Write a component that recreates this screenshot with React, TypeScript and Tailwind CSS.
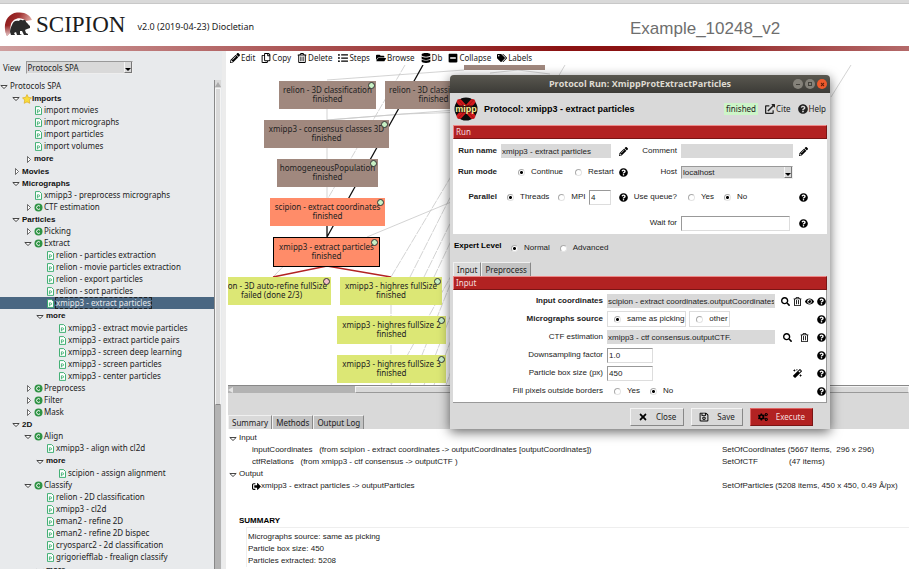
import React from "react";
import {
  FaPencilAlt,
  FaRegCopy,
  FaRegTrashAlt,
  FaListUl,
  FaFolderOpen,
  FaDatabase,
  FaMinusSquare,
  FaTags,
  FaQuestionCircle,
  FaExternalLinkAlt,
  FaSearch,
  FaEye,
  FaMagic,
  FaCogs,
  FaTimes,
  FaRegSave,
  FaSignOutAlt,
} from "react-icons/fa";

const noto = "font-['Noto_Sans',sans-serif]";
const arial = "font-['Liberation_Sans',sans-serif]";

/* ---------- header ---------- */

function ScipionLogo() {
  return (
    <svg width="30" height="26" viewBox="0 0 30 26" aria-hidden="true">
      <defs>
        <linearGradient id="crest" x1="0" y1="0" x2="1" y2="0.4">
          <stop offset="0" stopColor="#8a1414" />
          <stop offset="0.5" stopColor="#a03030" />
          <stop offset="1" stopColor="#e8b8b0" />
        </linearGradient>
        <linearGradient id="crestFade" x1="0" y1="0" x2="0" y2="1">
          <stop offset="0.55" stopColor="#fff" stopOpacity="0" />
          <stop offset="1" stopColor="#fff" stopOpacity="0.75" />
        </linearGradient>
      </defs>
      <path d="M3 24C-2 14 2 2 13 .6C21-.4 26 3 28 8L22 9C17 4 9 6 7 12C6 16 6 20 6 21Z" fill="url(#crest)" />
      <path d="M3 24C-2 14 2 2 13 .6C21-.4 26 3 28 8L22 9C17 4 9 6 7 12C6 16 6 20 6 21Z" fill="url(#crestFade)" />
      <path
        d="M8 13C9 9 12 8 15 9C16 7 18 8 19 8.5C20 7 22 8 22 10C24 11 24 13 26 14L26 16C24 17 22 17 21 18L22 21L24 22V23H20L18 19L16 19L16 22L18 23H13L12 20L10 21L11 23H7L6 20C6 17 7 15 8 13Z"
        fill="#2b2b2b"
      />
    </svg>
  );
}

function Header() {
  return (
    <header className="shrink-0">
      <div className="h-1 border-b border-[#c8c8c8] bg-[#d9d9d9]" />
      <div className="flex h-[42px] items-center bg-white pl-1">
        <ScipionLogo />
        <span className="ml-0.5 font-['Liberation_Serif',serif] text-[23px] leading-6 text-[#1c1c1c]">SCIPION</span>
        <span className={`${noto} ml-3 mt-1 text-[9px] leading-3 text-[#222]`}>v2.0 (2019-04-23) Diocletian</span>
        <h1 className={`${arial} mt-2 ml-auto w-[279px] text-[17px] leading-5 text-[#6e6e6e]`}>Example_10248_v2</h1>
      </div>
      <div className="h-[5px] bg-[linear-gradient(to_right,#cf9f9f_0%,#8b1212_62%,#8b1212_70%,#b46a6a_100%)]" />
    </header>
  );
}

/* ---------- protocol tree ---------- */

type Row = { d: number; t: string; k: "open" | "closed" | "leaf"; bold?: boolean; icon?: "c" | "star"; sel?: boolean };

const open = (d: number, t: string, rest: Partial<Row> = {}): Row => ({ d, t, k: "open", ...rest });
const closed = (d: number, t: string, rest: Partial<Row> = {}): Row => ({ d, t, k: "closed", ...rest });
const leaf = (d: number, t: string, rest: Partial<Row> = {}): Row => ({ d, t, k: "leaf", ...rest });

const rows: Row[] = [
  open(0, "Protocols SPA"),
  open(1, "Imports", { bold: true, icon: "star" }),
  leaf(2, "import movies"),
  leaf(2, "import micrographs"),
  leaf(2, "import particles"),
  leaf(2, "import volumes"),
  closed(2, "more", { bold: true }),
  closed(1, "Movies", { bold: true }),
  open(1, "Micrographs", { bold: true }),
  leaf(2, "xmipp3 - preprocess micrographs"),
  closed(2, "CTF estimation", { icon: "c" }),
  open(1, "Particles", { bold: true }),
  closed(2, "Picking", { icon: "c" }),
  open(2, "Extract", { icon: "c" }),
  leaf(3, "relion - particles extraction"),
  leaf(3, "relion - movie particles extraction"),
  leaf(3, "relion - export particles"),
  leaf(3, "relion - sort particles"),
  leaf(3, "xmipp3 - extract particles", { sel: true }),
  open(3, "more", { bold: true }),
  leaf(4, "xmipp3 - extract movie particles"),
  leaf(4, "xmipp3 - extract particle pairs"),
  leaf(4, "xmipp3 - screen deep learning"),
  leaf(4, "xmipp3 - screen particles"),
  leaf(4, "xmipp3 - center particles"),
  closed(2, "Preprocess", { icon: "c" }),
  closed(2, "Filter", { icon: "c" }),
  closed(2, "Mask", { icon: "c" }),
  open(1, "2D", { bold: true }),
  open(2, "Align", { icon: "c" }),
  leaf(3, "xmipp3 - align with cl2d"),
  open(3, "more", { bold: true }),
  leaf(4, "scipion - assign alignment"),
  open(2, "Classify", { icon: "c" }),
  leaf(3, "relion - 2D classification"),
  leaf(3, "xmipp3 - cl2d"),
  leaf(3, "eman2 - refine 2D"),
  leaf(3, "eman2 - refine 2D bispec"),
  leaf(3, "cryosparc2 - 2d classification"),
  leaf(3, "grigoriefflab - frealign classify"),
  open(3, "more", { bold: true }),
];

const indent = ["pl-0", "pl-3", "pl-6", "pl-9", "pl-12"];

function Arrow({ kind }: { kind: "open" | "closed" | "leaf" }) {
  return (
    <svg className="mr-px shrink-0" width="9" height="9" viewBox="0 0 9 9" fill="#fff" stroke="#333" aria-hidden="true">
      {kind === "open" && <path d="M.8 3.5H7.2L4 6.5Z" strokeWidth="0.9" />}
      {kind === "closed" && <path d="M3.5 1.5V7.5L6.5 4.5Z" strokeWidth="0.7" />}
    </svg>
  );
}

function ProtocolIcon() {
  return (
    <svg className="mr-px shrink-0" width="9" height="9" viewBox="0 0 9 9" fill="#fff" stroke="#2fa866" aria-hidden="true">
      <path d="M1.5 .6H5.6L7.5 2.5V8.4H1.5Z" strokeWidth="0.9" />
      <path d="M3.4 7.2V3.8H4.6A1 1 0 0 1 4.6 5.8H3.4" strokeWidth="0.8" fill="none" />
    </svg>
  );
}

function ClassIcon() {
  return (
    <svg className="mr-px shrink-0" width="9" height="9" viewBox="0 0 9 9" aria-hidden="true">
      <circle cx="4.5" cy="4.5" r="4" fill="#2f9344" />
      <path d="M6 3.3A1.9 1.9 0 1 0 6 5.7" fill="none" stroke="#fff" strokeWidth="1" />
    </svg>
  );
}

function StarIcon() {
  return (
    <svg className="shrink-0" width="10" height="10" viewBox="0 0 10 10" aria-hidden="true">
      <path d="M5 .6L6.4 3.4L9.5 3.8L7.3 6L7.8 9.3L5 7.9L2.2 9.3L2.7 6L.5 3.8L3.6 3.4Z" fill="#f9dc3c" stroke="#dcae22" strokeWidth="0.7" />
    </svg>
  );
}

function Sidebar() {
  return (
    <aside className={`${noto} flex w-[226px] shrink-0 flex-col border-r-4 border-[#ececec] bg-[#e8eaec] text-[8px] text-[#222]`}>
      <div className="flex h-[29px] shrink-0 items-end gap-[5px] pb-[6px] pl-[3px]">
        <label htmlFor="view" className="leading-3">View</label>
        <Combo id="view" value="Protocols SPA" className="w-[107px]" />
      </div>
      <div className="flex min-h-0 flex-1">
        <ul className="min-w-0 flex-1 overflow-hidden">
          {rows.map((r, i) => (
            <li
              key={i}
              className={`flex items-center whitespace-nowrap ${indent[r.d]} ${r.t === "more" ? "h-[13px]" : "h-3"} ${
                r.bold ? `${arial} pt-px font-bold text-[#111]` : ""
              } ${r.sel ? "bg-[#4a6782] text-[#e8eaec]" : ""}`}
            >
              <Arrow kind={r.k} />
              {r.icon === "star" && <StarIcon />}
              {r.icon === "c" && <ClassIcon />}
              {r.k === "leaf" && <ProtocolIcon />}
              <span className={r.sel ? "outline-1 outline-dashed outline-[#222] leading-[10px]" : ""}>{r.t}</span>
            </li>
          ))}
        </ul>
        <div className="mr-px w-[7px] border-l border-[#888] bg-[#b3b3b3]">
          <div className="flex h-2 items-center justify-center bg-[#d9d9d9]">
            <span className="border-x-[3px] border-b-[5px] border-x-transparent border-b-[#aaa]" />
          </div>
          <div className="h-[317px] border border-[#f4f4f4] border-b-[#888] bg-[#d9d9d9]" />
        </div>
      </div>
    </aside>
  );
}

/* ---------- shared form parts ---------- */

function Combo({ id, value, className }: { id: string; value: string; className: string }) {
  return (
    <span className={`relative flex h-[13px] border border-[#999] border-r-[#eee] border-b-[#eee] bg-[#d9d9d9] ${className}`}>
      <select id={id} className="w-full appearance-none bg-transparent pl-px leading-[11px] outline-none">
        <option>{value}</option>
      </select>
      <span className="pointer-events-none absolute inset-y-0 right-0 flex w-2 items-end justify-center border-r border-b border-l border-[#777] border-l-[#f4f4f4] pb-px">
        <span className="border-x-[3px] border-t-[3px] border-x-transparent border-t-black" />
      </span>
    </span>
  );
}

function Radio({ name, label, checked, className = "" }: { name: string; label: string; checked?: boolean; className?: string }) {
  return (
    <label className={`flex items-center gap-[6px] ${className}`}>
      <input
        type="radio"
        name={name}
        defaultChecked={checked}
        className="size-[7px] shrink-0 appearance-none rounded-full border border-[#aaa] border-r-[#e4e4e4] border-b-[#e4e4e4] bg-white checked:bg-[radial-gradient(circle,#000_1px,#fff_2px)]"
      />
      {label}
    </label>
  );
}

const grayField = "h-[14px] min-w-0 bg-[#d9d9d9] px-px outline-none";
const whiteField = "h-[15px] min-w-0 border border-[#999] border-r-[#ddd] border-b-[#ddd] bg-white px-px outline-none";

function IconButton({ label, icon: Icon, size = 9 }: { label: string; icon: React.ComponentType<{ size?: number }>; size?: number }) {
  return (
    <button type="button" aria-label={label} className="flex size-3 items-center justify-center text-black">
      <Icon size={size} />
    </button>
  );
}

const HelpButton = () => <IconButton label="Help" icon={FaQuestionCircle} />;

function SectionBar({ title }: { title: string }) {
  return (
    <h3 className={`${noto} h-[14px] border border-[#e88] border-r-[#7a1515] border-b-[#7a1515] bg-[#b22222] pl-0.5 text-[8px] leading-3 text-[#f2dede]`}>
      {title}
    </h3>
  );
}

/* ---------- toolbar ---------- */

const tools = [
  { t: "Edit", i: FaPencilAlt },
  { t: "Copy", i: FaRegCopy },
  { t: "Delete", i: FaRegTrashAlt },
  { t: "Steps", i: FaListUl },
  { t: "Browse", i: FaFolderOpen },
  { t: "Db", i: FaDatabase },
  { t: "Collapse", i: FaMinusSquare },
  { t: "Labels", i: FaTags },
];

function Toolbar() {
  return (
    <nav className={`${noto} flex h-[14px] shrink-0 items-center gap-[6px] pl-[4px] text-[8px] text-[#222]`}>
      {tools.map(({ t, i: Icon }) => (
        <button key={t} type="button" className="flex items-center gap-px">
          <Icon size={10} className="text-black" />
          {t}
        </button>
      ))}
    </nav>
  );
}

/* ---------- protocol graph ---------- */

type GraphNode = { x: number; y: number; w: number; name: string; status?: string; tone: "brown" | "orange" | "lime"; failed?: boolean; active?: boolean };

const nodes: GraphNode[] = [
  { x: 51, y: 16, w: 97, name: "relion - 3D classification", tone: "brown" },
  { x: 157, y: 16, w: 97, name: "relion - 3D classification", tone: "brown" },
  { x: 236, y: -23, w: 81, name: "", status: "", tone: "brown" },
  { x: 36, y: 55, w: 125, name: "xmipp3 - consensus classes 3D", tone: "brown" },
  { x: 49, y: 94, w: 101, name: "homogeneousPopulation", tone: "brown" },
  { x: 42, y: 133, w: 115, name: "scipion - extract coordinates", tone: "orange" },
  { x: 46, y: 173, w: 105, name: "xmipp3 - extract particles", tone: "orange", active: true },
  { x: -16, y: 212, w: 119, name: "relion - 3D auto-refine fullSize", status: "failed (done 2/3)", tone: "lime", failed: true },
  { x: 112, y: 212, w: 102, name: "xmipp3 - highres fullSize", tone: "lime" },
  { x: 109, y: 251, w: 109, name: "xmipp3 - highres fullSize 2", tone: "lime" },
  { x: 109, y: 290, w: 109, name: "xmipp3 - highres fullSize 3", tone: "lime" },
];

const tones = { brown: "bg-[#a0887e]", orange: "bg-[#ff8c69]", lime: "bg-[#dce775]" };

function Graph() {
  return (
    <section className={`${noto} relative min-h-0 flex-1 overflow-hidden bg-white text-[8px]`} aria-label="Protocol graph">
      <svg className="absolute top-0 left-0" width="681" height="320" fill="none" aria-hidden="true">
        <g stroke="#c8c8c8" strokeWidth="0.8">
          <path d="M99 15L236 5M99 55L240 44M99 55L175 49L240 47M99 44V55M99 83V94M99 122V133" />
          <path d="M177 0L99 135" strokeDasharray="8 1" />
          <path d="M139 172L240 130M75 181L45 212" />
          <path d="M163 212L240 83M182 212L240 97M196 212L240 122M206 212L240 140" strokeDasharray="9 1" />
          <path d="M163 240V320M163 320L240 180M182 320L240 175M196 320L240 205M206 320L240 230M218 320L240 260" strokeDasharray="9 1" />
          <path d="M262 8L290 5L322 9M337 0L330 12" />
          <path d="M603 32L623 0" />
        </g>
        <path d="M195 0L99 172M99 160V172" stroke="#111" strokeWidth="1.3" />
        <path d="M45 212L99 201L163 212" stroke="#b22222" strokeWidth="1.3" />
      </svg>
      {nodes.map((n, i) => (
        <div
          key={i}
          className={`absolute h-7 pt-1 text-center leading-[9px] whitespace-nowrap text-[#222] ${tones[n.tone]} ${
            n.active ? "outline-1 outline-black" : ""
          }`}
          style={{ left: n.x, top: n.y, width: n.w }}
        >
          {n.name}
          <br />
          {n.status ?? "finished"}
          <span
            className={`absolute top-px right-px size-[7px] rounded-full border border-[#333] ${n.failed ? "bg-[#f2c0c8]" : "bg-[#c8f0c4]"}`}
          />
        </div>
      ))}
    </section>
  );
}

/* ---------- summary ---------- */

function SummaryPane() {
  return (
    <section className={`${arial} h-[140px] shrink-0 bg-white pt-[3px] text-[8px] leading-3 whitespace-pre text-[#222]`}>
      <div className="grid grid-cols-[minmax(0,1fr)_187px] pl-px">
        <div className="col-span-2 flex items-center"><Arrow kind="open" />Input</div>
        <div className="pl-[23px]">{"inputCoordinates   (from scipion - extract coordinates -> outputCoordinates [outputCoordinates])"}</div>
        <div>{"SetOfCoordinates (5667 items,  296 x 296)"}</div>
        <div className="pl-[23px]">{"ctfRelations   (from xmipp3 - ctf consensus -> outputCTF )"}</div>
        <div className="flex"><span className="w-[67px]">SetOfCTF</span>(47 items)</div>
        <div className="col-span-2 flex items-center"><Arrow kind="open" />Output</div>
        <div className="flex items-center pl-[23px]"><FaSignOutAlt size={9} className="text-black" />{"xmipp3 - extract particles -> outputParticles"}</div>
        <div>SetOfParticles (5208 items, 450 x 450, 0.49 Å/px)</div>
      </div>
      <h2 className="mt-[23px] pl-[11px] font-bold text-black">SUMMARY</h2>
      <div className="ml-[18px] border-t border-l border-[#eee] pt-[3px] pl-px">
        <p>Micrographs source: same as picking</p>
        <p>Particle box size: 450</p>
        <p>Particles extracted: 5208</p>
      </div>
    </section>
  );
}

function Tabs({ items }: { items: string[] }) {
  return (
    <div role="tablist" className={`${noto} flex items-end text-[8px] leading-3 text-[#222]`}>
      {items.map((t, i) => (
        <button
          key={t}
          type="button"
          role="tab"
          aria-selected={i === 0}
          className={`h-[14px] border-t border-r border-l border-[#f0f0f0] border-r-[#888] px-[3px] ${i === 0 ? "bg-[#d9d9d9]" : "bg-[#c3c3c3]"}`}
        >
          {t}
        </button>
      ))}
    </div>
  );
}

/* ---------- protocol dialog ---------- */

function XmippLogo() {
  return (
    <span className="relative flex size-6 items-center justify-center">
      <svg className="absolute inset-0" width="24" height="24" viewBox="0 0 24 24" aria-hidden="true">
        <circle cx="12" cy="12" r="11.5" fill="#0c0c0c" />
        <g stroke="#d3181c" strokeWidth="5.5" strokeLinecap="round">
          <path d="M5.5 4.8L18.5 19.2M18.5 4.8L5.5 19.2" />
        </g>
        <path d="M4 2.5L11 10M20 2.5L13 10M4 21.5L11 14M20 21.5L13 14" stroke="#701010" strokeWidth="0.6" />
        <rect x="1" y="8.5" width="22" height="7" rx="2" fill="#0c0c0c" opacity="0.75" />
      </svg>
      <span className="relative font-['Liberation_Sans',sans-serif] text-[9px] leading-none font-bold text-[#f6f29a]">mipp</span>
    </span>
  );
}

function DialogButton({ icon: Icon, label, primary }: { icon: React.ComponentType<{ size?: number; className?: string }>; label: string; primary?: boolean }) {
  return (
    <button
      type="button"
      className={`flex h-[18px] items-center gap-2 border px-[7px] ${
        primary ? "border-[#d66] border-r-[#7a1515] border-b-[#7a1515] bg-[#b22222] text-[#f2dede]" : "border-[#f4f4f4] border-r-[#888] border-b-[#888] bg-[#d9d9d9]"
      }`}
    >
      <Icon size={10} className="text-black" />
      {label}
    </button>
  );
}

function ProtocolDialog() {
  return (
    <div
      role="dialog"
      aria-label="Protocol Run: XmippProtExtractParticles"
      className={`${arial} absolute top-[75px] left-[450px] w-[380px] rounded-t-[4px] bg-[#d9d9d9] text-[8px] leading-3 text-[#222] shadow-[0_3px_12px_rgba(0,0,0,0.6)]`}
    >
      <div className="relative flex h-[18px] items-center justify-center rounded-t-[4px] bg-linear-to-b from-[#5a5850] to-[#3c3b37]">
        <h2 className="font-['Open_Sans',sans-serif] text-[9px] font-bold text-[#dfdbd2]">Protocol Run: XmippProtExtractParticles</h2>
        <div className="absolute right-[3px] flex gap-[2px]">
          <button type="button" aria-label="Minimize" className="flex size-[10px] items-center justify-center rounded-full bg-[#85827a]"><span className="h-px w-1 bg-[#44423c]" /></button>
          <button type="button" aria-label="Maximize" className="flex size-[10px] items-center justify-center rounded-full bg-[#85827a]"><span className="size-1 border border-[#44423c]" /></button>
          <button type="button" aria-label="Close window" className="flex size-[10px] items-center justify-center rounded-full bg-[#ee5a2c] text-[#5a1c08]"><FaTimes size={5} /></button>
        </div>
      </div>

      <div className="flex h-8 items-center px-1">
        <XmippLogo />
        <h2 className="ml-[6px] text-[9px] font-bold text-black">Protocol: xmipp3 - extract particles</h2>
        <div className={`${noto} ml-auto flex items-center gap-[7px]`}>
          <span className="bg-[#cdf5c8] px-0.5">finished</span>
          <button type="button" className="flex items-center gap-px"><FaExternalLinkAlt size={10} />Cite</button>
          <button type="button" className="flex items-center gap-px"><FaQuestionCircle size={10} />Help</button>
        </div>
      </div>

      <div className="px-[3px]">
        <SectionBar title="Run" />
        <div className="h-[95px] bg-white pt-[3px]">
          <div className="grid grid-cols-[44px_110px_16px_42px_112px_1fr] items-center gap-x-[4px] whitespace-nowrap [&>*:nth-child(6n+1)]:justify-self-end [&>*:nth-child(6n+4)]:justify-self-end">
            <label htmlFor="run-name" className="flex h-[18px] items-center font-bold">Run name</label>
            <input id="run-name" className={grayField} defaultValue="xmipp3 - extract particles" />
            <span className="justify-self-center"><IconButton label="Edit run name" icon={FaPencilAlt} /></span>
            <label htmlFor="comment">Comment</label>
            <input id="comment" className={grayField} />
            <IconButton label="Edit comment" icon={FaPencilAlt} />

            <span className="flex h-6 items-center font-bold">Run mode</span>
            <div className="flex gap-3 pl-[17px]">
              <Radio name="mode" label="Continue" checked />
              <Radio name="mode" label="Restart" />
            </div>
            <span className="justify-self-center"><HelpButton /></span>
            <label htmlFor="host">Host</label>
            <Combo id="host" value="localhost" className="w-full" />
            <span />

            <span className="flex h-[26px] items-center font-bold">Parallel</span>
            <div className="flex items-center pl-[6px]">
              <Radio name="parallel" label="Threads" checked />
              <Radio name="parallel" label="MPI" className="ml-[9px]" />
              <input aria-label="Number of threads" className={`${whiteField} ml-auto w-[22px]`} defaultValue="4" />
            </div>
            <span className="justify-self-center"><HelpButton /></span>
            <span>Use queue?</span>
            <div className="flex gap-[10px] pl-[7px]">
              <Radio name="queue" label="Yes" />
              <Radio name="queue" label="No" checked />
            </div>
            <HelpButton />

            <span />
            <span />
            <span />
            <label htmlFor="wait-for" className="flex h-[26px] items-center">Wait for</label>
            <input id="wait-for" className={`${whiteField} w-[109px]`} />
            <HelpButton />
          </div>
        </div>

        <div className="flex h-7 items-center">
          <span className="mb-1 w-[58px] pl-px font-bold text-black">Expert Level</span>
          <Radio name="level" label="Normal" checked />
          <Radio name="level" label="Advanced" className="ml-[10px]" />
        </div>

        <Tabs items={["Input", "Preprocess"]} />
        <SectionBar title="Input" />
        <div className="border-r border-b border-[#999] bg-white py-[2px]">
          <div className="grid auto-rows-[18px] grid-cols-[150px_168px_1fr] items-center gap-x-[4px] whitespace-nowrap [&>*:nth-child(3n+1)]:justify-self-end">
            <label htmlFor="coords" className="font-bold">Input coordinates</label>
            <input id="coords" className={grayField} defaultValue="scipion - extract coordinates.outputCoordinates" />
            <div className="flex justify-end pr-px">
              <IconButton label="Search coordinates" icon={FaSearch} />
              <IconButton label="Remove coordinates" icon={FaRegTrashAlt} />
              <IconButton label="View coordinates" icon={FaEye} />
              <HelpButton />
            </div>

            <span className="font-bold">Micrographs source</span>
            <div className="flex gap-[3px]">
              <Radio name="source" label="same as picking" checked className="h-4 border border-[#ddd] pr-px pl-[6px]" />
              <Radio name="source" label="other" className="h-4 border border-[#ddd] pr-px pl-[6px]" />
            </div>
            <div className="flex justify-end pr-px"><HelpButton /></div>

            <label htmlFor="ctf">CTF estimation</label>
            <input id="ctf" className={grayField} defaultValue="xmipp3 - ctf consensus.outputCTF." />
            <div className="flex justify-end gap-[5px] pr-px">
              <IconButton label="Search CTF" icon={FaSearch} />
              <IconButton label="Remove CTF" icon={FaRegTrashAlt} />
              <HelpButton />
            </div>

            <label htmlFor="downsampling">Downsampling factor</label>
            <input id="downsampling" className={`${whiteField} w-[46px]`} defaultValue="1.0" />
            <div className="flex justify-end pr-px"><HelpButton /></div>

            <label htmlFor="box-size">Particle box size (px)</label>
            <input id="box-size" className={`${whiteField} w-[46px]`} defaultValue="450" />
            <div className="flex justify-end gap-3 pr-px">
              <IconButton label="Box size wizard" icon={FaMagic} />
              <HelpButton />
            </div>

            <span>Fill pixels outside borders</span>
            <div className="flex gap-[10px] pl-[7px]">
              <Radio name="fill" label="Yes" />
              <Radio name="fill" label="No" checked />
            </div>
            <div className="flex justify-end pr-px"><HelpButton /></div>
          </div>
        </div>
      </div>

      <div className={`${noto} flex justify-end gap-[7px] pt-[5px] pr-[17px] pb-[3px]`}>
        <DialogButton icon={FaTimes} label="Close" />
        <DialogButton icon={FaRegSave} label="Save" />
        <DialogButton icon={FaCogs} label="Execute" primary />
      </div>
    </div>
  );
}

export default function App() {
  return (
    <div className="relative flex h-screen flex-col overflow-hidden bg-white">
      <Header />
      <div className="flex min-h-0 flex-1">
        <Sidebar />
        <main className="flex min-w-0 flex-1 flex-col bg-white">
          <Toolbar />
          <div className="flex min-h-0 flex-1 flex-col pl-[2px]">
            <Graph />
            <div className="flex h-[8px] shrink-0 border-t border-[#888] bg-[#b3b3b3]">
              <div className="flex w-[7px] items-center">
                <span className="border-y-[3px] border-r-[5px] border-y-transparent border-r-[#e4e4e4]" />
              </div>
              <div className="ml-[120px] flex-1 border border-[#f4f4f4] border-b-[#999] bg-[#d9d9d9]" />
            </div>
            <div className="flex h-[36px] shrink-0 items-end bg-[#d9d9d9]">
              <Tabs items={["Summary", "Methods", "Output Log"]} />
            </div>
            <SummaryPane />
          </div>
        </main>
      </div>
      <ProtocolDialog />
    </div>
  );
}
